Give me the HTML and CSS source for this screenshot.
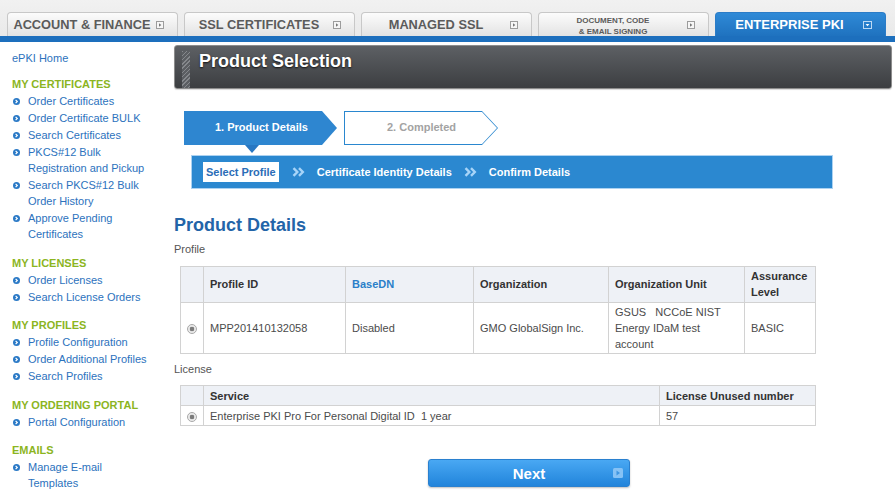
FILE: index.html
```html
<!DOCTYPE html>
<html lang="en">
<head>
<meta charset="utf-8">
<title>Product Selection</title>
<link rel="stylesheet" href="styles.css">
</head>
<body>
<header class="topnav">
  <nav class="tabs">
    <a class="tab"><span class="tab-label">ACCOUNT &amp; FINANCE</span><svg class="tab-ic" width="8" height="8" viewBox="0 0 8 8"><rect x="0.5" y="0.5" width="7" height="7" fill="#f6f6f6" stroke="#9c9c9c"/><path d="M3 2.2 L5.4 4 L3 5.8Z" fill="#777"/></svg></a>
    <a class="tab"><span class="tab-label">SSL CERTIFICATES</span><svg class="tab-ic" width="8" height="8" viewBox="0 0 8 8"><rect x="0.5" y="0.5" width="7" height="7" fill="#f6f6f6" stroke="#9c9c9c"/><path d="M3 2.2 L5.4 4 L3 5.8Z" fill="#777"/></svg></a>
    <a class="tab"><span class="tab-label">MANAGED SSL</span><svg class="tab-ic" width="8" height="8" viewBox="0 0 8 8"><rect x="0.5" y="0.5" width="7" height="7" fill="#f6f6f6" stroke="#9c9c9c"/><path d="M3 2.2 L5.4 4 L3 5.8Z" fill="#777"/></svg></a>
    <a class="tab"><span class="tab-label small">DOCUMENT, CODE<br>&amp; EMAIL SIGNING</span><svg class="tab-ic" width="8" height="8" viewBox="0 0 8 8"><rect x="0.5" y="0.5" width="7" height="7" fill="#f6f6f6" stroke="#9c9c9c"/><path d="M3 2.2 L5.4 4 L3 5.8Z" fill="#777"/></svg></a>
    <a class="tab active"><span class="tab-label">ENTERPRISE PKI</span><svg class="tab-ic" width="9" height="8" viewBox="0 0 9 8"><rect x="0.5" y="0.5" width="8" height="7" fill="none" stroke="#bcd9f3"/><path d="M2.6 3 L6.4 3 L4.5 5.2Z" fill="#fff"/></svg></a>
  </nav>
  <div class="bar"></div>
</header>

<div class="layout">
  <aside class="sidebar">
    <a class="home">ePKI Home</a>
    <section class="group">
      <h3>MY CERTIFICATES</h3>
      <ul>
        <li><svg class="bul" width="7" height="7" viewBox="0 0 7 7"><circle cx="3.5" cy="3.5" r="3.5" fill="#2a79c6"/><path d="M2.6 1.8 L4.3 3.5 L2.6 5.2" stroke="#fff" stroke-width="1.2" fill="none"/></svg><a>Order Certificates</a></li>
        <li><svg class="bul" width="7" height="7" viewBox="0 0 7 7"><circle cx="3.5" cy="3.5" r="3.5" fill="#2a79c6"/><path d="M2.6 1.8 L4.3 3.5 L2.6 5.2" stroke="#fff" stroke-width="1.2" fill="none"/></svg><a>Order Certificate BULK</a></li>
        <li><svg class="bul" width="7" height="7" viewBox="0 0 7 7"><circle cx="3.5" cy="3.5" r="3.5" fill="#2a79c6"/><path d="M2.6 1.8 L4.3 3.5 L2.6 5.2" stroke="#fff" stroke-width="1.2" fill="none"/></svg><a>Search Certificates</a></li>
        <li><svg class="bul" width="7" height="7" viewBox="0 0 7 7"><circle cx="3.5" cy="3.5" r="3.5" fill="#2a79c6"/><path d="M2.6 1.8 L4.3 3.5 L2.6 5.2" stroke="#fff" stroke-width="1.2" fill="none"/></svg><a>PKCS#12 Bulk<br>Registration and Pickup</a></li>
        <li><svg class="bul" width="7" height="7" viewBox="0 0 7 7"><circle cx="3.5" cy="3.5" r="3.5" fill="#2a79c6"/><path d="M2.6 1.8 L4.3 3.5 L2.6 5.2" stroke="#fff" stroke-width="1.2" fill="none"/></svg><a>Search PKCS#12 Bulk<br>Order History</a></li>
        <li><svg class="bul" width="7" height="7" viewBox="0 0 7 7"><circle cx="3.5" cy="3.5" r="3.5" fill="#2a79c6"/><path d="M2.6 1.8 L4.3 3.5 L2.6 5.2" stroke="#fff" stroke-width="1.2" fill="none"/></svg><a>Approve Pending<br>Certificates</a></li>
      </ul>
    </section>
    <section class="group">
      <h3>MY LICENSES</h3>
      <ul>
        <li><svg class="bul" width="7" height="7" viewBox="0 0 7 7"><circle cx="3.5" cy="3.5" r="3.5" fill="#2a79c6"/><path d="M2.6 1.8 L4.3 3.5 L2.6 5.2" stroke="#fff" stroke-width="1.2" fill="none"/></svg><a>Order Licenses</a></li>
        <li><svg class="bul" width="7" height="7" viewBox="0 0 7 7"><circle cx="3.5" cy="3.5" r="3.5" fill="#2a79c6"/><path d="M2.6 1.8 L4.3 3.5 L2.6 5.2" stroke="#fff" stroke-width="1.2" fill="none"/></svg><a>Search License Orders</a></li>
      </ul>
    </section>
    <section class="group">
      <h3>MY PROFILES</h3>
      <ul>
        <li><svg class="bul" width="7" height="7" viewBox="0 0 7 7"><circle cx="3.5" cy="3.5" r="3.5" fill="#2a79c6"/><path d="M2.6 1.8 L4.3 3.5 L2.6 5.2" stroke="#fff" stroke-width="1.2" fill="none"/></svg><a>Profile Configuration</a></li>
        <li><svg class="bul" width="7" height="7" viewBox="0 0 7 7"><circle cx="3.5" cy="3.5" r="3.5" fill="#2a79c6"/><path d="M2.6 1.8 L4.3 3.5 L2.6 5.2" stroke="#fff" stroke-width="1.2" fill="none"/></svg><a>Order Additional Profiles</a></li>
        <li><svg class="bul" width="7" height="7" viewBox="0 0 7 7"><circle cx="3.5" cy="3.5" r="3.5" fill="#2a79c6"/><path d="M2.6 1.8 L4.3 3.5 L2.6 5.2" stroke="#fff" stroke-width="1.2" fill="none"/></svg><a>Search Profiles</a></li>
      </ul>
    </section>
    <section class="group">
      <h3>MY ORDERING PORTAL</h3>
      <ul>
        <li><svg class="bul" width="7" height="7" viewBox="0 0 7 7"><circle cx="3.5" cy="3.5" r="3.5" fill="#2a79c6"/><path d="M2.6 1.8 L4.3 3.5 L2.6 5.2" stroke="#fff" stroke-width="1.2" fill="none"/></svg><a>Portal Configuration</a></li>
      </ul>
    </section>
    <section class="group">
      <h3>EMAILS</h3>
      <ul>
        <li><svg class="bul" width="7" height="7" viewBox="0 0 7 7"><circle cx="3.5" cy="3.5" r="3.5" fill="#2a79c6"/><path d="M2.6 1.8 L4.3 3.5 L2.6 5.2" stroke="#fff" stroke-width="1.2" fill="none"/></svg><a>Manage E-mail<br>Templates</a></li>
        <li><svg class="bul" width="7" height="7" viewBox="0 0 7 7"><circle cx="3.5" cy="3.5" r="3.5" fill="#2a79c6"/><path d="M2.6 1.8 L4.3 3.5 L2.6 5.2" stroke="#fff" stroke-width="1.2" fill="none"/></svg><a>View All Email Events</a></li>
      </ul>
    </section>
  </aside>

  <main class="main">
    <div class="page-title">
      <span class="stripe"></span>
      <h1>Product Selection</h1>
    </div>

    <div class="stepper">
      <div class="step step1">1. Product Details</div>
      <div class="step step2"><span>2. Completed</span></div>
      <span class="notch"></span>
    </div>

    <div class="substeps">
      <span class="current">Select Profile</span>
      <svg class="chev" width="13" height="10" viewBox="0 0 13 10"><path d="M1.5 1.2 L5.3 5 L1.5 8.8 M7 1.2 L10.8 5 L7 8.8" stroke="#a7d4f8" stroke-width="2.4" fill="none"/></svg>
      <span>Certificate Identity Details</span>
      <svg class="chev" width="13" height="10" viewBox="0 0 13 10"><path d="M1.5 1.2 L5.3 5 L1.5 8.8 M7 1.2 L10.8 5 L7 8.8" stroke="#a7d4f8" stroke-width="2.4" fill="none"/></svg>
      <span>Confirm Details</span>
    </div>

    <h2 class="section-title">Product Details</h2>
    <div class="label">Profile</div>
    <table class="grid profile">
      <colgroup><col class="c-radio"><col class="c-id"><col class="c-dn"><col class="c-org"><col class="c-ou"><col class="c-al"></colgroup>
      <thead>
        <tr><th></th><th>Profile ID</th><th class="link">BaseDN</th><th>Organization</th><th>Organization Unit</th><th>Assurance Level</th></tr>
      </thead>
      <tbody>
        <tr><td class="radio-cell"><span class="radio"></span></td><td>MPP201410132058</td><td>Disabled</td><td>GMO GlobalSign Inc.</td><td>GSUS&nbsp;&nbsp; NCCoE NIST<br>Energy IDaM test<br>account</td><td>BASIC</td></tr>
      </tbody>
    </table>

    <div class="label license-label">License</div>
    <table class="grid license">
      <colgroup><col class="c-radio"><col class="c-svc"><col class="c-num"></colgroup>
      <thead>
        <tr><th></th><th>Service</th><th>License Unused number</th></tr>
      </thead>
      <tbody>
        <tr><td class="radio-cell"><span class="radio"></span></td><td>Enterprise PKI Pro For Personal Digital ID&nbsp; 1 year</td><td>57</td></tr>
      </tbody>
    </table>

    <div class="actions">
      <button class="next" type="button">Next<svg class="next-ic" width="10" height="10" viewBox="0 0 10 10"><rect x="0" y="0" width="10" height="10" rx="1.5" fill="#86c2f5"/><path d="M3.5 2.5 L7 5 L3.5 7.5Z" fill="#3e96e2"/></svg></button>
    </div>
  </main>
</div>
</body>
</html>
```

FILE: styles.css
```css
html, body {
  margin: 0;
  height: 496px;
  overflow: hidden;
  background: #fff;
  font-family: "Liberation Sans", Arial, sans-serif;
}

/* ---------- top navigation ---------- */
.topnav {
  background: linear-gradient(#f1f1f1, #e8e8e8);
}
.tabs {
  display: flex;
  gap: 6px;
  padding: 12px 0 0 7px;
  height: 24px;
}
.tab {
  width: 171px;
  height: 24px;
  box-sizing: border-box;
  display: flex;
  align-items: center;
  padding-right: 13px;
  border: 1px solid #c8c8c8;
  border-bottom: none;
  border-radius: 4px 4px 0 0;
  background: linear-gradient(#fcfcfc, #e3e3e3);
  color: #5b5b5b;
  font-weight: bold;
  font-size: 12.8px;
  text-decoration: none;
}
.tab-label {
  flex: 1;
  text-align: center;
  white-space: nowrap;
}
.tab-label.small {
  font-size: 8px;
  line-height: 11px;
  padding-top: 2px;
}
.tab-ic {
  flex: none;
  display: block;
}
.tab.active {
  background: linear-gradient(#2f8ad7, #1f72bf);
  border-color: #2b7cc7;
  color: #fff;
  font-size: 13px;
}
.bar {
  height: 6px;
  background: #1d6fbd;
}

/* ---------- layout ---------- */
.layout {
  display: flex;
}
.sidebar {
  width: 174px;
  flex: none;
  box-sizing: border-box;
  padding: 8px 0 0 12px;
  font-size: 11px;
  line-height: 16px;
}
.sidebar a {
  color: #2c72bd;
  text-decoration: none;
}
.home {
  display: block;
}
.group {
  margin-bottom: 12.5px;
}
.group:first-of-type {
  margin-top: 10px;
}
.group h3 {
  margin: 0 0 1px;
  font-size: 11px;
  line-height: 16px;
  color: #8cb51f;
  font-weight: bold;
}
.group ul {
  list-style: none;
  margin: 0;
  padding: 0;
}
.group li {
  display: flex;
  align-items: flex-start;
  margin-bottom: 1px;
}
.bul {
  flex: none;
  margin: 5px 8px 0 1px;
}

.main {
  flex: 1;
  padding: 3px 3px 0 0;
  min-width: 0;
}

/* ---------- page title ---------- */
.page-title {
  height: 44px;
  box-sizing: border-box;
  border: 1px solid #8c8c8c;
  border-radius: 3px;
  background: linear-gradient(#5d6064, #3c3e41);
  display: flex;
  align-items: flex-start;
  box-shadow: 0 1px 1px rgba(0,0,0,0.15);
}
.stripe {
  width: 8px;
  align-self: stretch;
  margin: 5px 9px 0 7px;
  background: repeating-linear-gradient(135deg, #85888c 0 1px, #5b5e62 1px 3px);
}
.page-title h1 {
  margin: 0;
  padding-top: 4px;
  font-size: 18px;
  line-height: 22px;
  color: #fff;
  font-weight: bold;
  text-shadow: 0 1px 2px rgba(0,0,0,0.8);
}

/* ---------- stepper ---------- */
.stepper {
  position: relative;
  display: flex;
  gap: 7px;
  margin: 22px 0 0 10px;
}
.step {
  height: 34px;
  box-sizing: border-box;
  font-size: 11px;
  font-weight: bold;
}
.step1 {
  width: 153px;
  background: #2e86d0;
  color: #fff;
  line-height: 32px;
  padding-left: 31px;
  clip-path: polygon(0 0, 138px 0, 153px 17px, 138px 34px, 0 34px);
}
.step2 {
  width: 154px;
  padding: 1px;
  background: #2a87cf;
  clip-path: polygon(0 0, 138px 0, 154px 17px, 138px 34px, 0 34px);
}
.step2 span {
  display: block;
  height: 32px;
  background: #fff;
  color: #a3a3a3;
  line-height: 30px;
  padding-left: 42px;
  clip-path: polygon(0 0, 137px 0, 152px 16px, 137px 32px, 0 32px);
}
.notch {
  position: absolute;
  left: 61px;
  top: 34px;
  width: 0;
  height: 0;
  border-left: 7px solid transparent;
  border-right: 7px solid transparent;
  border-top: 8px solid #2877c2;
}

/* ---------- sub steps ---------- */
.substeps {
  margin: 10px 0 0 17px;
  width: 642px;
  height: 34px;
  box-sizing: border-box;
  border: 1px solid #acd2f1;
  background: #2b88d0;
  display: flex;
  align-items: center;
  gap: 12px;
  padding-left: 11px;
  font-size: 11px;
  font-weight: bold;
  color: #fff;
}
.current {
  background: #fff;
  color: #2b6db7;
  padding: 0 3px;
  line-height: 20px;
  margin-right: 1px;
}
.chev {
  flex: none;
  display: block;
}

/* ---------- product details ---------- */
.section-title {
  margin: 25px 0 0;
  font-size: 18px;
  line-height: 22px;
  color: #2364a8;
  font-weight: bold;
}
.label {
  margin-top: 5px;
  font-size: 11px;
  line-height: 16px;
  color: #555;
}
.license-label {
  margin-top: 7px;
}

.grid {
  border-collapse: collapse;
  table-layout: fixed;
  margin: 9px 0 0 6px;
  width: 635px;
  font-size: 11px;
  line-height: 16px;
  border: 1px solid #cfcfcf;
}
.grid th,
.grid td {
  border: 1px solid #d2d2d2;
  text-align: left;
  vertical-align: middle;
  padding: 2px 6px;
}
.grid th {
  background: #eef1f6;
  color: #333;
  font-weight: bold;
}
.grid th.link {
  color: #2a7fc9;
}
.grid td {
  color: #4b4b4b;
  padding: 1px 6px;
}
.profile thead th {
  height: 31px;
  padding: 1px 6px 2px;
}
.c-radio { width: 23px; }
.c-id { width: 142px; }
.c-dn { width: 128px; }
.c-org { width: 135px; }
.c-ou { width: 136px; }
.c-al { width: 71px; }
.c-svc { width: 456px; }
.c-num { width: 156px; }

.license {
  margin-top: 8px;
}
.license th,
.license td {
  padding: 0 6px;
  height: 19px;
}
.radio-cell {
  text-align: center !important;
  padding: 0 !important;
}
.radio {
  display: inline-block;
  width: 10px;
  height: 10px;
  box-sizing: border-box;
  border: 1px solid #a9a9a9;
  border-radius: 50%;
  background: radial-gradient(circle, #7b7b7b 0 2px, #e6e6e6 2.6px, #f7f7f7);
  vertical-align: middle;
}

/* ---------- actions ---------- */
.actions {
  margin-top: 33px;
  padding-left: 254px;
}
.next {
  position: relative;
  width: 202px;
  height: 28px;
  border: 1px solid #2a80cf;
  border-radius: 3px;
  background: linear-gradient(#49a8f3, #2184db);
  color: #fff;
  font-family: "Liberation Sans", Arial, sans-serif;
  font-size: 15px;
  font-weight: bold;
  padding: 0;
  box-shadow: 0 1px 2px rgba(0,0,0,0.25);
}
.next-ic {
  position: absolute;
  right: 6px;
  top: 8px;
}
```
